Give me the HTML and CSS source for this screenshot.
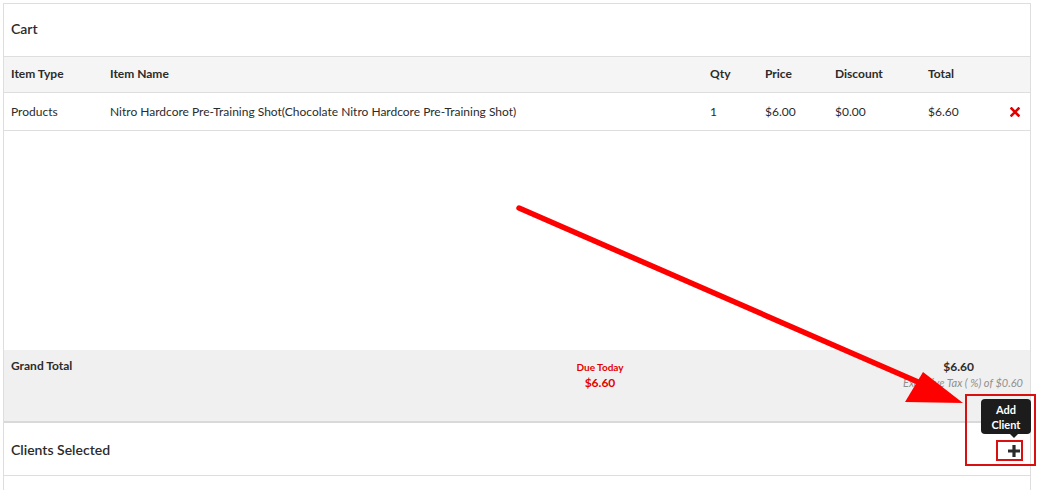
FILE: index.html
```html
<!DOCTYPE html>
<html>
<head>
<meta charset="utf-8">
<link rel="stylesheet" href="styles.css">
</head>
<body>
<div class="page">
  <div class="card">
    <div class="card-head">Cart</div>
    <div class="row thead">
      <div class="c-type">Item Type</div>
      <div class="c-name">Item Name</div>
      <div class="c-qty">Qty</div>
      <div class="c-price">Price</div>
      <div class="c-disc">Discount</div>
      <div class="c-total">Total</div>
      <div class="c-act"></div>
    </div>
    <div class="row tbody">
      <div class="c-type">Products</div>
      <div class="c-name">Nitro Hardcore Pre-Training Shot(Chocolate Nitro Hardcore Pre-Training Shot)</div>
      <div class="c-qty">1</div>
      <div class="c-price">$6.00</div>
      <div class="c-disc">$0.00</div>
      <div class="c-total">$6.60</div>
      <div class="c-act">
        <svg class="xicon" viewBox="0 0 10 10" width="10" height="10"><path d="M1.5 1.5 L8.5 8.5 M8.5 1.5 L1.5 8.5" stroke="#e30000" stroke-width="2.6" stroke-linecap="square"/></svg>
      </div>
    </div>
    <div class="spacer"></div>
    <div class="grand">
      <div class="g-label">Grand Total</div>
      <div class="g-due">
        <div class="due-label">Due Today</div>
        <div class="due-amt">$6.60</div>
      </div>
      <div class="g-right">
        <div class="g-amt">$6.60</div>
        <div class="g-tax">Exclusive Tax ( %) of $0.60</div>
      </div>
    </div>
    <div class="clients-head">
      <span>Clients Selected</span>
      <span class="plus-wrap">
        <svg viewBox="0 0 14 14" width="14" height="14"><path d="M7 1 V13 M1 7 H13" stroke="#2b2b2b" stroke-width="3.2"/></svg>
        <span class="tip">Add<br>Client</span>
      </span>
    </div>
    <div class="clients-body"></div>
  </div>
  <svg class="arrow" width="1040" height="490" viewBox="0 0 1040 490">
    <line x1="519" y1="208" x2="925" y2="385" stroke="#ff0000" stroke-width="5.5" stroke-linecap="round"/>
    <polygon points="963,403 905,402 923,372" fill="#ff0000"/>
    <rect x="966" y="395" width="69" height="70" fill="none" stroke="#d81010" stroke-width="2"/>
    <rect x="997" y="441" width="25" height="19" fill="none" stroke="#d81010" stroke-width="2"/>
  </svg>
</div>
</body>
</html>
```
FILE: styles.css
```css
* { box-sizing: border-box; }
html, body { margin: 0; padding: 0; background: #fff; }
body {
  font-family: "Lato", "Noto Sans", sans-serif;
  color: #2b2b2b;
  width: 1040px;
  height: 490px;
  overflow: hidden;
}
.page {
  position: relative;
  padding: 3px 0 0 3px;
  width: 1040px;
  height: 490px;
}
.card {
  width: 1028px;
  border: 1px solid #dedede;
  border-bottom: none;
  background: #fff;
}
.card-head {
  height: 53px;
  display: flex;
  align-items: center;
  padding-left: 7px;
  padding-bottom: 3px;
  font-size: 14px;
  font-weight: 600;
  border-bottom: 1px solid #dedede;
}
.row {
  display: flex;
  align-items: center;
  font-size: 12px;
  border-bottom: 1px solid #dedede;
}
.thead {
  height: 36px;
  background: #f5f5f5;
  font-weight: 700;
  padding-bottom: 2px;
}
.tbody { height: 38px; }
.c-type { width: 106px; padding-left: 7px; }
.c-name { width: 600px; }
.c-qty { width: 55px; }
.c-price { width: 70px; }
.c-disc { width: 93px; }
.c-total { width: 80px; }
.c-act { flex: 1; display: flex; justify-content: flex-end; padding-right: 10px; }
.xicon { display: block; }
.spacer { height: 219px; }
.grand {
  height: 73px;
  background: #f0f0f0;
  border-bottom: 2px solid #d9d9d9;
  display: flex;
  align-items: flex-start;
  padding-top: 8px;
}
.g-label {
  width: 540px;
  padding-left: 7px;
  font-size: 12px;
  font-weight: 700;
}
.g-due {
  width: 112px;
  text-align: center;
  color: #e30000;
  font-weight: 700;
  padding-top: 3px;
}
.due-label { font-size: 10px; }
.due-amt { font-size: 12px; margin-top: 2px; }
.g-right {
  flex: 1;
  display: flex;
  flex-direction: column;
  align-items: flex-end;
  padding-right: 7px;
  padding-top: 1px;
}
.g-amt {
  font-size: 12px;
  font-weight: 700;
  margin-right: 49px;
}
.g-tax {
  font-size: 11px;
  font-style: italic;
  color: #8f8f8f;
  margin-top: 2px;
}
.clients-head {
  height: 53px;
  display: flex;
  align-items: center;
  justify-content: space-between;
  padding: 0 9px 0 7px;
  font-size: 14px;
  font-weight: 600;
  border-bottom: 1px solid #dedede;
}
.plus-wrap {
  position: relative;
  display: flex;
  padding-top: 4px;
}
.plus-wrap svg { display: block; }
.tip {
  position: absolute;
  bottom: 24px;
  right: -10px;
  background: #1c1c1c;
  color: #fff;
  font-size: 11px;
  font-weight: 700;
  line-height: 15px;
  text-align: center;
  padding: 3px 0 2px;
  border-radius: 4px;
  width: 50px;
}
.tip::after {
  content: "";
  position: absolute;
  left: 29px;
  bottom: -4px;
  border-left: 4px solid transparent;
  border-right: 4px solid transparent;
  border-top: 4px solid #1c1c1c;
}
.clients-body { height: 20px; }
.arrow {
  position: absolute;
  left: 0;
  top: 0;
  pointer-events: none;
}
```
